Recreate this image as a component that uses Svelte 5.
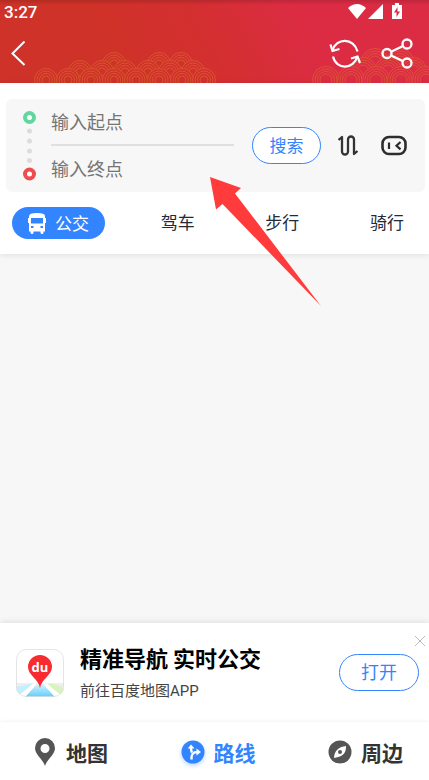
<script>
  const row = (xs, y, r) => xs.map((x) => ({ x, y, r }));
  const waves = [
    ...row([114, 159, 181], 64, 12),
    ...row([80, 102, 125, 148, 170, 193], 72, 12),
    ...row([46, 68, 91, 114, 136, 159, 182, 204], 80, 12),
    ...row([375, 400], 62, 14),
    ...row([363, 388, 413], 71, 14),
    ...row([326, 351, 376, 401, 426], 80, 14)
  ];
  let start = $state('');
  let end = $state('');
</script>

<div class="page">
  <header>
    <svg class="backdrop" viewBox="0 0 429 83" preserveAspectRatio="xMidYMax slice" aria-hidden="true">
      <defs>
        <linearGradient id="red" gradientUnits="userSpaceOnUse" x1="130" y1="80" x2="290" y2="-10">
          <stop offset="0" stop-color="#cf3228" />
          <stop offset="0.5" stop-color="#d42f31" />
          <stop offset="1" stop-color="#dc2c44" />
        </linearGradient>
        <linearGradient id="shade" x1="0" y1="0" x2="0" y2="1">
          <stop offset="0" stop-color="#000" stop-opacity=".14" />
          <stop offset="1" stop-color="#000" stop-opacity="0" />
        </linearGradient>
      </defs>
      <rect width="429" height="83" fill="url(#red)" />
      {#each waves as w}
        <circle cx={w.x} cy={w.y} r={w.r} fill="url(#red)" />
        <g fill="none" stroke="#dc6a2e" stroke-opacity=".6" stroke-width="1">
          <circle cx={w.x} cy={w.y} r={w.r - 0.5} />
          <circle cx={w.x} cy={w.y} r={w.r - 3} />
          <circle cx={w.x} cy={w.y} r={w.r - 5.5} />
          <circle cx={w.x} cy={w.y} r={w.r - 8} />
        </g>
      {/each}
      <rect width="429" height="5" fill="url(#shade)" />
    </svg>
    <div class="status">
      <span>3:27</span>
      <svg width="56" height="18" viewBox="0 0 56 18" fill="#fff" aria-hidden="true">
        <path d="M0 5Q9-3 18 5L9 16Z" />
        <path d="M35 1V16H20Z" />
        <path fill-rule="evenodd" d="M47 0h4v2h3v14H44V2h3ZM49.500 4l-3.500 5.500h2.500V14l3.500-5.500H49.500Z" />
      </svg>
    </div>
    <div class="bar">
      <button class="plain" aria-label="返回">
        <svg width="16" height="26" viewBox="0 0 16 26" fill="none" stroke="#fff" stroke-width="2"><path d="M13.500 .500 1.500 12.500l12 11.500" /></svg>
      </button>
      <div class="tools">
        <button class="plain" aria-label="刷新">
          <svg width="32" height="30" viewBox="0 0 32 30" fill="none" stroke="#fff" stroke-width="2.200">
            <path d="M3.500 11.500C7-1.500 25-1.500 28.500 12.500M4 17.500C7 31 25 31 28.500 17" />
            <path d="m1.500 5.500 2 6.500L10.500 10M22 19.500l6.500-2 2.500 6.500" />
          </svg>
        </button>
        <button class="plain" aria-label="分享">
          <svg width="32" height="32" viewBox="0 0 32 32" fill="none" stroke="#fff" stroke-width="2.300">
            <circle cx="6" cy="15.500" r="4.500" /><circle cx="26" cy="6" r="4.500" /><circle cx="26" cy="25" r="4.500" />
            <path d="m10.500 13.500 11-5.300M10.500 17.700l11 5.200" />
          </svg>
        </button>
      </div>
    </div>
  </header>

  <section class="planner">
    <form class="search" onsubmit={(e) => e.preventDefault()}>
      <svg width="14" height="70" viewBox="0 0 14 70" aria-hidden="true">
        <circle cx="6.500" cy="6.500" r="4.500" fill="#fff" stroke="#62d69c" stroke-width="4" />
        <g fill="#dcdcdc"><circle cx="6.500" cy="20" r="2.500" /><circle cx="6.500" cy="30" r="2.500" /><circle cx="6.500" cy="40" r="2.500" /><circle cx="6.500" cy="49.500" r="2.500" /></g>
        <circle cx="6.500" cy="63" r="4.500" fill="#fff" stroke="#ee4c4f" stroke-width="4" />
      </svg>
      <div class="fields">
        <input aria-label="起点" placeholder="输入起点" bind:value={start} />
        <input aria-label="终点" placeholder="输入终点" bind:value={end} />
      </div>
      <button class="outline find">搜索</button>
      <button class="plain swap" type="button" aria-label="交换起点和终点">
        <svg width="20" height="22" viewBox="0 0 20 22" fill="none" stroke="#333" stroke-width="2.300" stroke-linejoin="round">
          <path d="M.5 5 4 2v14.500a3 3 0 0 0 6 0V4.500a3 3 0 0 1 6 0V19l3.500-3" />
        </svg>
      </button>
      <button class="plain" type="button" aria-label="小度助手">
        <svg width="28" height="22" viewBox="0 0 28 22" fill="none" stroke="#2d2d2d">
          <rect x="2.500" y="2" width="23" height="17" rx="6.500" stroke-width="2.600" />
          <path d="M9 7.500v6.500M20.500 7l-4 3.700 4 3.700" stroke-width="2.200" />
        </svg>
      </button>
    </form>
    <nav class="modes">
      <a class="active" href="#bus">
        <svg width="18" height="22" viewBox="0 0 18 22" fill="#fff" aria-hidden="true">
          <path fill-rule="evenodd" d="M1 4Q1 1 9 1t8 3v15.500h-1.500V20.500a1.500 1.500 0 0 1-3 0v-1h-7v1a1.500 1.500 0 0 1-3 0v-1H1ZM3 6v5.500h12V6ZM3 14v2h2.500v-2ZM12.500 14v2H15v-2Z" />
          <path d="M0 6h1v5H0ZM17 6h1v5h-1Z" />
        </svg>
        公交
      </a>
      <a href="#drive">驾车</a>
      <a href="#walk">步行</a>
      <a href="#ride">骑行</a>
    </nav>
    <svg class="pointer" width="112" height="130" viewBox="0 0 112 130" aria-hidden="true">
      <path d="M0 0 31 11l-6 5.500L111 129 12.500 27 6 32.500Z" fill="#ff3b3b" />
    </svg>
  </section>

  <main></main>

  <aside>
    <svg class="logo" width="48" height="48" viewBox="0 0 48 48" aria-hidden="true">
      <defs>
        <clipPath id="tile"><rect width="48" height="48" rx="10" /></clipPath>
        <linearGradient id="road" x1="0" y1="0" x2="0" y2="1"><stop stop-color="#c9f1ff" /><stop offset="1" stop-color="#62ccfa" /></linearGradient>
      </defs>
      <g clip-path="url(#tile)">
        <rect width="48" height="48" fill="#fff" />
        <path d="M0 34h48v4H0Z" fill="#eee" />
        <path d="M0 38 14 35h5L3 46l-3 1Z" fill="#c5efff" />
        <path d="M29 35h9l10 4v8L44 45Z" fill="#d8f3bd" />
        <path d="M20 36h8l11 12H9Z" fill="url(#road)" />
        <path d="M17 34.500h4L9 48H2ZM27 34.500h4L46 48h-7Z" fill="#fff" />
      </g>
      <rect x=".5" y=".5" width="47" height="47" rx="10" fill="none" stroke="#ddd" stroke-opacity=".8" />
      <path d="M24 39C22.500 30 12 26 12 18a12 12 0 0 1 24 0c0 8-10.500 12-12 21Z" fill="#f82b31" />
      <text x="24" y="23" text-anchor="middle" class="du">du</text>
    </svg>
    <div class="promo">
      <h2>精准导航 实时公交</h2>
      <p>前往百度地图APP</p>
    </div>
    <button class="outline open">打开</button>
    <button class="plain close" aria-label="关闭">
      <svg width="12" height="12" viewBox="0 0 12 12" stroke="#bbb"><path d="m1 1 10 10M11 1 1 11" /></svg>
    </button>
  </aside>

  <nav class="bottom">
    <a href="#map">
      <svg width="24" height="28" viewBox="0 0 24 28" aria-hidden="true"><path fill="#555" fill-rule="evenodd" d="M12 28C10 21 2 17 2 10a10 10 0 0 1 20 0c0 7-8 11-10 18ZM12 6a4.500 4.500 0 1 0 0 9 4.500 4.500 0 0 0 0-9Z" /></svg>
      地图
    </a>
    <a class="current" href="#route">
      <svg class="glow" width="24" height="24" viewBox="0 0 24 24" aria-hidden="true">
        <circle cx="12" cy="12" r="11.500" fill="#3385ff" />
        <path d="M10.500 19.500c-.5-5 1.500-7.500 6-7.500M11 12.500C10 11 10 9.500 10 7.500" fill="none" stroke="#fff" stroke-width="2.400" />
        <path d="M6.800 8.500 10 4.500l3.500 4ZM15.500 8.500l4.500 3.500-4.500 3.500Z" fill="#fff" />
      </svg>
      路线
    </a>
    <a href="#nearby">
      <svg width="24" height="24" viewBox="0 0 24 24" aria-hidden="true">
        <circle cx="12" cy="12" r="11.500" fill="#555" />
        <path fill="#fff" fill-rule="evenodd" d="M18 6c0 5-1 7-3.500 9S9 17.500 6 18c.3-4 1-6 3.500-8.500S14.500 6.500 18 6ZM12 10a2 2 0 1 0 0 4 2 2 0 0 0 0-4Z" />
      </svg>
      周边
    </a>
  </nav>
</div>

<style>
  :global(body) { margin: 0; }
  .page {
    display: flex;
    flex-direction: column;
    min-height: 100vh;
    background: #f7f7f7;
    font-family: "Noto Sans CJK SC", sans-serif;
  }
  button, input { font-family: inherit; }
  a { color: inherit; text-decoration: none; }
  svg { display: block; flex: none; }
  .plain { border: 0; padding: 0; background: none; cursor: pointer; }

  header { position: relative; color: #fff; background: #d42f30; }
  .backdrop { position: absolute; inset: 0; width: 100%; height: 100%; }
  .status {
    position: relative;
    display: flex;
    justify-content: space-between;
    align-items: center;
    height: 24px;
    padding: 0 25px 0 4px;
    font: 500 17px/24px Roboto, sans-serif;
  }
  .bar {
    position: relative;
    display: flex;
    justify-content: space-between;
    align-items: center;
    height: 59px;
    padding: 0 16px 0 11px;
  }
  .tools { display: flex; align-items: center; gap: 20px; }

  .planner {
    position: relative;
    padding: 16px 4px 15px 6px;
    background: #fff;
    box-shadow: 0 1px 6px rgba(0, 0, 0, .1);
  }
  .search {
    display: flex;
    align-items: center;
    padding: 0 17px;
    border-radius: 6px;
    background: #f7f7f7;
  }
  .fields { flex: 1; min-width: 0; margin: 0 18px 0 14px; }
  input {
    display: block;
    box-sizing: border-box;
    width: 100%;
    height: 46px;
    padding: 0 0 2px;
    border: 0;
    outline: 0;
    background: none;
    color: #333;
    font-size: 18px;
  }
  input:first-child { border-bottom: 2px solid #e0e0e0; height: 47px; }
  input::placeholder { color: #757575; opacity: 1; }
  .outline {
    box-sizing: border-box;
    height: 37px;
    padding: 0 0 3px;
    border: 1px solid #3385ff;
    border-radius: 19px;
    background: #fff;
    color: #3385ff;
    font-size: 17px;
    cursor: pointer;
  }
  .find { width: 69px; }
  .swap { margin: 0 22px 0 17px; }
  .modes {
    display: flex;
    justify-content: space-between;
    padding: 15px 6px 0;
    color: #222b38;
    font-size: 17px;
    line-height: 30px;
  }
  .modes a { height: 32px; padding: 0 15px; }
  .modes .active {
    display: flex;
    align-items: center;
    gap: 9px;
    padding: 0 16px;
    border-radius: 16px;
    background: #3385ff;
    color: #fff;
  }
  .pointer { position: absolute; left: 210px; top: 94px; pointer-events: none; }

  main { flex: 1; }

  aside {
    position: relative;
    display: flex;
    align-items: center;
    height: 99px;
    padding: 0 10px 0 16px;
    background: #fff;
    box-shadow: 0 -1px 6px rgba(0, 0, 0, .1);
  }
  .du { font: 700 13px "Open Sans", sans-serif; fill: #fff; }
  .promo { flex: 1; margin: 4px 0 0 16px; }
  h2 { margin: 0; color: #000; font-size: 22px; line-height: 32px; font-weight: 700; }
  p { margin: 0; color: #444; font: 15px/36px Roboto, "Noto Sans CJK SC", sans-serif; }
  .open { width: 80px; font-size: 18px; }
  .close { position: absolute; right: 3px; top: 12px; }

  .bottom {
    position: relative;
    display: flex;
    justify-content: space-between;
    align-items: center;
    box-sizing: border-box;
    height: 58px;
    padding: 2px 26px 0 33px;
    background: #fff;
    box-shadow: 0 0 4px rgba(0, 0, 0, .08);
    color: #333;
    font-size: 21px;
    font-weight: 700;
  }
  .bottom a { display: flex; align-items: center; gap: 9px; }
  .current { color: #3385ff; }
  .glow { filter: drop-shadow(0 2px 2px rgba(51, 133, 255, .35)); }
</style>
